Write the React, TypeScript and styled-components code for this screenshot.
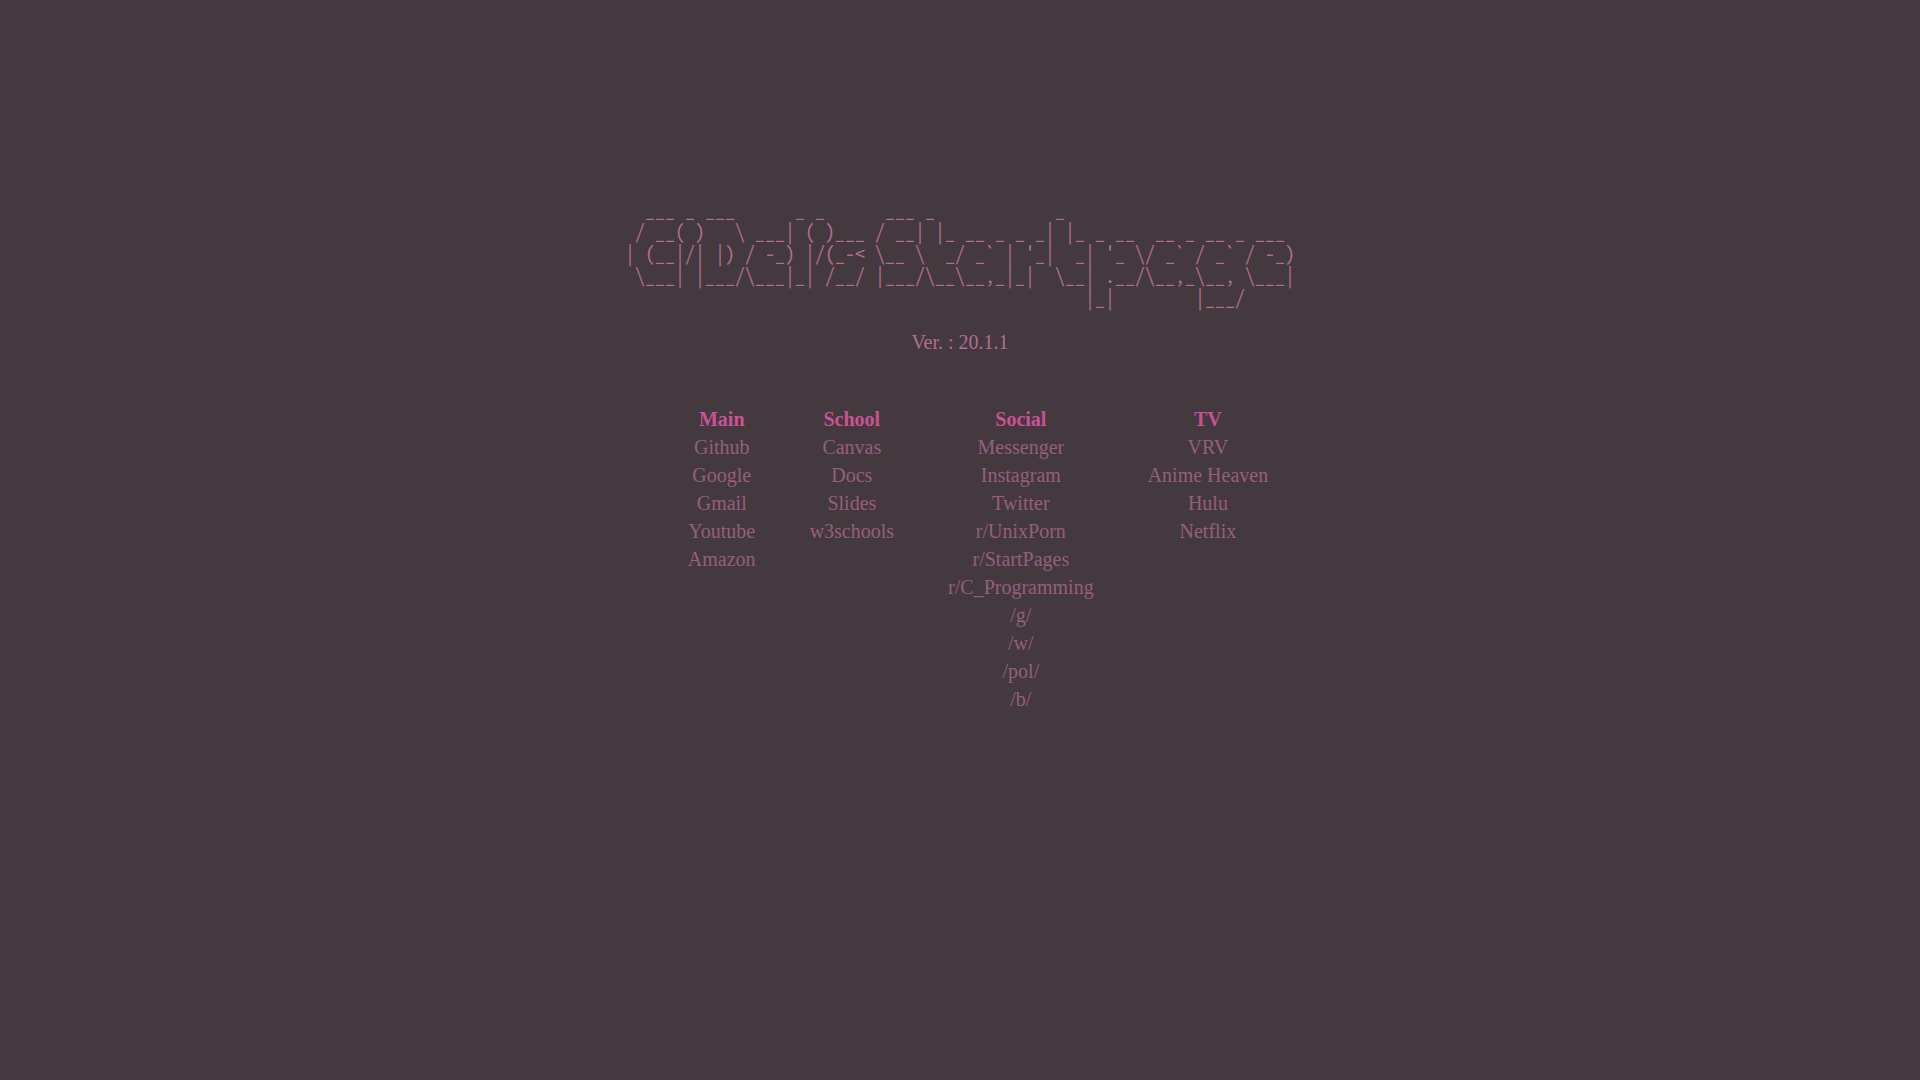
import React from "react";
import styled, { createGlobalStyle } from "styled-components";

const GlobalStyle = createGlobalStyle`
  body {
    margin: 0;
    background: #44393f;
    color: #b16e91;
    font-family: "Liberation Serif", "Times New Roman", serif;
    font-size: 20px;
  }
`;

const Page = styled.main`
  display: flex;
  flex-direction: column;
  align-items: center;
  padding: 198px 16px 40px;
`;

const Banner = styled.pre`
  margin: 0;
  font-family: "Noto Sans Mono CJK SC", "Liberation Mono", monospace;
  font-size: 20px;
  line-height: 22px;
`;

const Version = styled.p`
  margin: 22px 0 0;
  line-height: 24px;
`;

const Columns = styled.nav`
  display: flex;
  gap: 54px;
  margin-top: 51px;
  padding-left: 36px;
`;

const Column = styled.section`
  text-align: center;
  line-height: 28px;
`;

const Heading = styled.h2`
  margin: 0;
  color: #c85294;
  font-size: 20px;
  font-weight: bold;
`;

const List = styled.ul`
  margin: 0;
  padding: 0;
  list-style: none;
`;

const Link = styled.a`
  color: #955f7c;
  text-decoration: none;

  &:hover {
    color: #c85294;
  }
`;

const banner = [
  "  ___ _ ___      _ _      ___ _            _                       ",
  " / __( )   \\ ___| ( )___ / __| |_ __ _ _ _| |_ _ __  __ _ __ _ ___ ",
  "| (__|/| |) / -_) |/(_-< \\__ \\  _/ _` | '_|  _| '_ \\/ _` / _` / -_)",
  " \\___| |___/\\___|_| /__/ |___/\\__\\__,_|_|  \\__| .__/\\__,_\\__, \\___|",
  "                                              |_|        |___/     ",
].join("\n");

const groups: { title: string; links: string[] }[] = [
  { title: "Main", links: ["Github", "Google", "Gmail", "Youtube", "Amazon"] },
  { title: "School", links: ["Canvas", "Docs", "Slides", "w3schools"] },
  {
    title: "Social",
    links: [
      "Messenger",
      "Instagram",
      "Twitter",
      "r/UnixPorn",
      "r/StartPages",
      "r/C_Programming",
      "/g/",
      "/w/",
      "/pol/",
      "/b/",
    ],
  },
  { title: "TV", links: ["VRV", "Anime Heaven", "Hulu", "Netflix"] },
];

export default function App() {
  return (
    <>
      <GlobalStyle />
      <Page>
        <Banner>{banner}</Banner>
        <Version>Ver. : 20.1.1</Version>
        <Columns>
          {groups.map((group) => (
            <Column key={group.title}>
              <Heading>{group.title}</Heading>
              <List>
                {group.links.map((name) => (
                  <li key={name}>
                    <Link href="#">{name}</Link>
                  </li>
                ))}
              </List>
            </Column>
          ))}
        </Columns>
      </Page>
    </>
  );
}
